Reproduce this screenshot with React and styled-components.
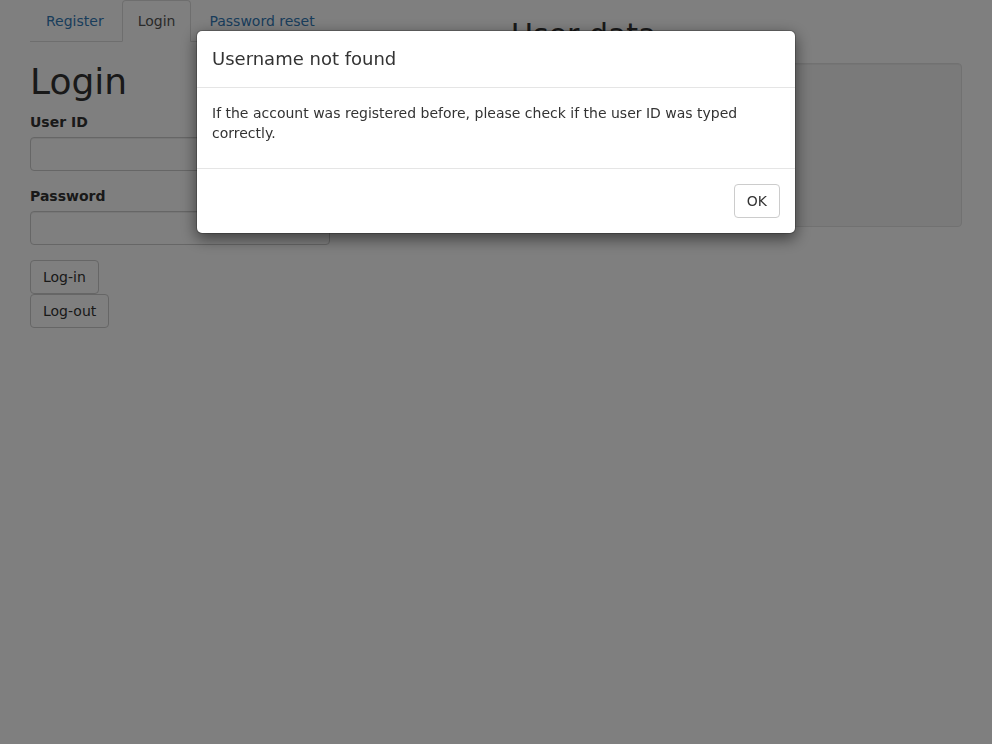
import React from "react";
import styled, { createGlobalStyle } from "styled-components";

const GlobalStyle = createGlobalStyle`
  * { box-sizing: border-box; }
  html, body { margin: 0; padding: 0; background: #fff; }
  body {
    font-family: "DejaVu Sans", sans-serif;
    font-size: 14px;
    line-height: 1.42857143;
    color: #333;
  }
`;

const Page = styled.div`
  display: grid;
  grid-template-columns: 1fr 1fr;
  padding: 0 15px;
`;

const Column = styled.div`
  padding: 0 15px;
  display: flex;
  flex-direction: column;
  align-items: stretch;
`;

const Tabs = styled.ul`
  list-style: none;
  margin: 0;
  padding: 0;
  display: flex;
  border-bottom: 1px solid #ddd;
`;

const TabItem = styled.li`
  margin-bottom: -1px;
`;

const TabLink = styled.a`
  display: block;
  padding: 10px 15px;
  margin-right: 2px;
  line-height: 20px;
  border: 1px solid ${(p) => (p.$active ? "#ddd" : "transparent")};
  border-bottom-color: ${(p) => (p.$active ? "#fff" : "transparent")};
  border-radius: 4px 4px 0 0;
  background: ${(p) => (p.$active ? "#fff" : "transparent")};
  color: ${(p) => (p.$active ? "#555" : "#337ab7")};
  text-decoration: none;
  cursor: pointer;
`;

const Heading = styled.h1`
  font-size: 36px;
  font-weight: 500;
  line-height: 1.1;
  margin: 20px 0 10px;
`;

const SubHeading = styled.h2`
  font-size: 30px;
  font-weight: 500;
  line-height: 1.1;
  margin: 18px 0 12px;
`;

const FormGroup = styled.div`
  margin-bottom: 15px;
`;

const Label = styled.label`
  display: block;
  font-weight: bold;
  margin-bottom: 5px;
  line-height: 20px;
`;

const Input = styled.input`
  display: block;
  width: 300px;
  height: 34px;
  padding: 6px 12px;
  font-family: inherit;
  font-size: 14px;
  color: #555;
  background: #fff;
  border: 1px solid #ccc;
  border-radius: 4px;
  box-shadow: inset 0 1px 1px rgba(0, 0, 0, 0.075);
`;

const ButtonStack = styled.div`
  display: flex;
  flex-direction: column;
  align-items: flex-start;
`;

const Button = styled.button`
  display: inline-block;
  height: 34px;
  padding: 6px 12px;
  font-family: inherit;
  font-size: 14px;
  line-height: 20px;
  color: #333;
  background: #fff;
  border: 1px solid #ccc;
  border-radius: 4px;
  cursor: pointer;
`;

const Well = styled.div`
  height: 164px;
  padding: 19px;
  background: #f5f5f5;
  border: 1px solid #e3e3e3;
  border-radius: 4px;
  box-shadow: inset 0 1px 1px rgba(0, 0, 0, 0.05);
`;

const Backdrop = styled.div`
  position: fixed;
  inset: 0;
  background: rgba(0, 0, 0, 0.5);
  display: flex;
  justify-content: center;
  align-items: flex-start;
  padding-top: 30px;
`;

const Dialog = styled.div`
  width: 600px;
  background: #fff;
  border: 1px solid rgba(0, 0, 0, 0.2);
  border-radius: 6px;
  box-shadow: 0 5px 15px rgba(0, 0, 0, 0.5);
  background-clip: padding-box;
`;

const DialogHeader = styled.div`
  padding: 15px;
  border-bottom: 1px solid #e5e5e5;
`;

const DialogTitle = styled.h4`
  margin: 0;
  font-size: 18px;
  font-weight: 500;
  line-height: 1.42857143;
`;

const DialogBody = styled.div`
  padding: 15px;
`;

const DialogText = styled.p`
  margin: 0 0 10px;
`;

const DialogFooter = styled.div`
  padding: 15px;
  border-top: 1px solid #e5e5e5;
  display: flex;
  justify-content: flex-end;
`;

export default function App() {
  return (
    <>
      <GlobalStyle />
      <Page>
        <Column>
          <Tabs>
            <TabItem>
              <TabLink>Register</TabLink>
            </TabItem>
            <TabItem>
              <TabLink $active>Login</TabLink>
            </TabItem>
            <TabItem>
              <TabLink>Password reset</TabLink>
            </TabItem>
          </Tabs>
          <Heading>Login</Heading>
          <FormGroup>
            <Label>User ID</Label>
            <Input type="text" />
          </FormGroup>
          <FormGroup>
            <Label>Password</Label>
            <Input type="password" />
          </FormGroup>
          <ButtonStack>
            <Button>Log-in</Button>
            <Button>Log-out</Button>
          </ButtonStack>
        </Column>
        <Column>
          <SubHeading>User data</SubHeading>
          <Well />
        </Column>
      </Page>
      <Backdrop>
        <Dialog>
          <DialogHeader>
            <DialogTitle>Username not found</DialogTitle>
          </DialogHeader>
          <DialogBody>
            <DialogText>
              If the account was registered before, please check if the user ID was typed correctly.
            </DialogText>
          </DialogBody>
          <DialogFooter>
            <Button>OK</Button>
          </DialogFooter>
        </Dialog>
      </Backdrop>
    </>
  );
}
